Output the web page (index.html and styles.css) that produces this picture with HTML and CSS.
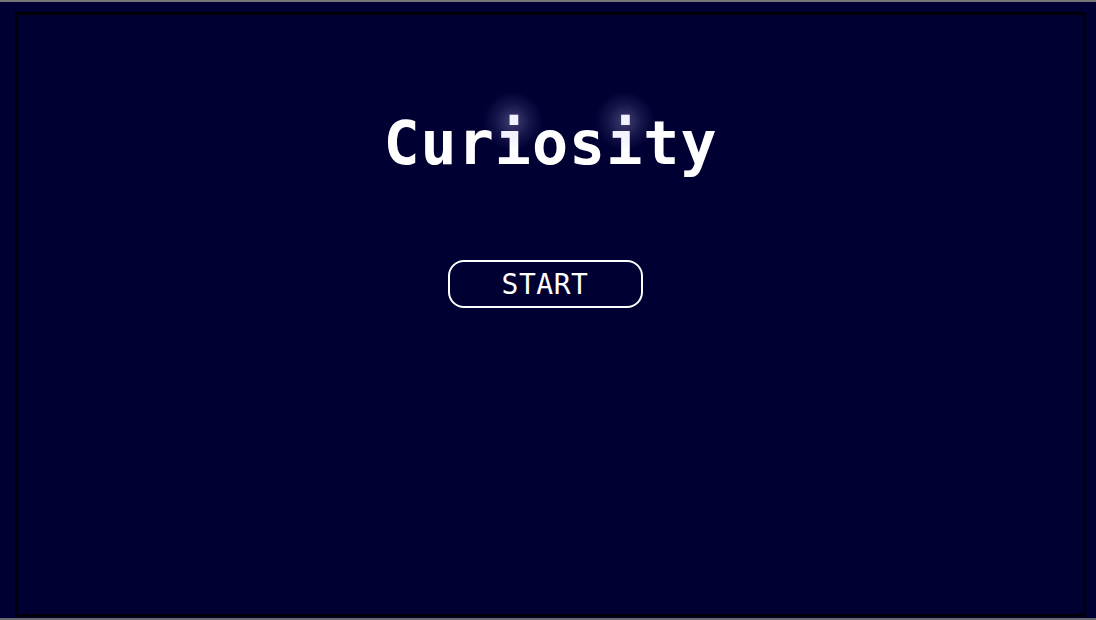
FILE: index.html
```html
<!DOCTYPE html>
<html>
<head>
<meta charset="utf-8">
<link rel="stylesheet" href="styles.css">
</head>
<body>
<div class="screen">
  <div class="frame">
    <h1 class="title">Cur<span class="glow">i</span>os<span class="glow">i</span>ty</h1>
    <button class="start">START</button>
  </div>
</div>
</body>
</html>
```
FILE: styles.css
```css
html, body {
  margin: 0;
  padding: 0;
  background: #000033;
}
.screen {
  width: 1096px;
  height: 620px;
  box-sizing: border-box;
  border-top: 2px solid #757575;
  border-bottom: 2px solid #6a6a72;
  background: #000033;
  padding: 10px 10px 1px 15px;
  display: flex;
}
.frame {
  flex: 1;
  border: 3px solid #000008;
  display: flex;
  flex-direction: column;
  align-items: center;
  padding-top: 98px;
}
.title {
  margin: 0;
  font-family: "DejaVu Sans Mono", monospace;
  font-weight: bold;
  font-size: 60px;
  line-height: 61px;
  letter-spacing: 1px;
  color: #ffffff;
}
.glow {
  position: relative;
}
.glow::before {
  content: "";
  position: absolute;
  left: 50%;
  top: -17px;
  width: 60px;
  height: 60px;
  margin-left: -30px;
  border-radius: 50%;
  background: radial-gradient(circle, rgba(210,210,255,0.30) 0%, rgba(160,160,230,0.13) 40%, rgba(0,0,51,0) 70%);
  pointer-events: none;
}
.start {
  margin-top: 86px;
  margin-right: 11px;
  width: 195px;
  height: 48px;
  box-sizing: border-box;
  border: 2px solid #ffffff;
  border-radius: 16px;
  background: transparent;
  color: #ffffff;
  font-family: "DejaVu Sans Mono", monospace;
  font-size: 28px;
  letter-spacing: 0.5px;
  padding: 0;
  display: flex;
  align-items: center;
  justify-content: center;
}
```
